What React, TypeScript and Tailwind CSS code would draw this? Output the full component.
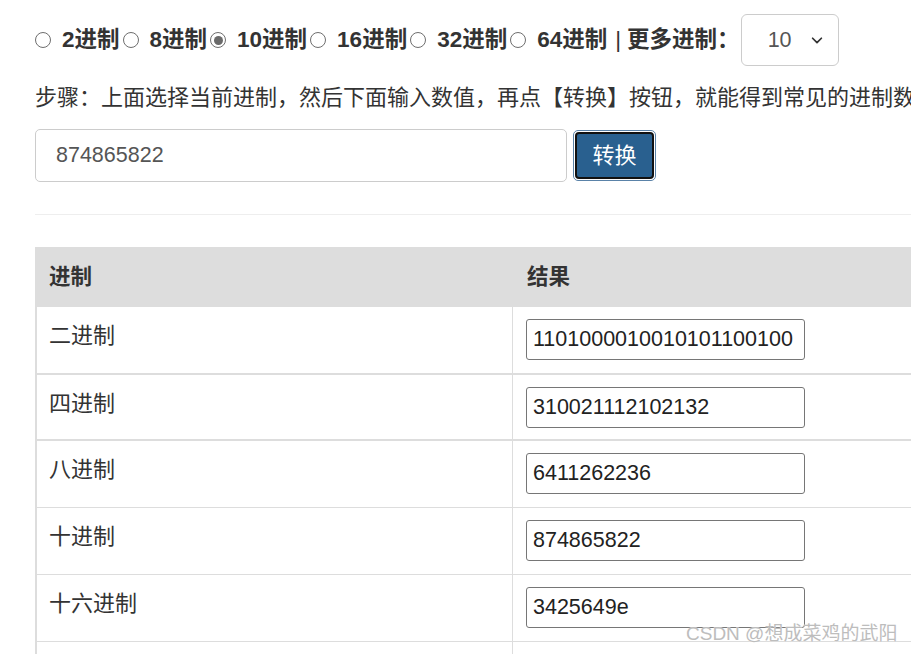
import { useState } from "react";

// ── Data ───────────────────────────────────────────────────

const BASES = ["2", "8", "10", "16", "32", "64"];

const RESULTS: { label: string; value: string }[] = [
  { label: "二进制", value: "1101000010010101100100" },
  { label: "四进制", value: "310021112102132" },
  { label: "八进制", value: "6411262236" },
  { label: "十进制", value: "874865822" },
  { label: "十六进制", value: "3425649e" },
  { label: "三十二进制", value: "q2lb4u" },
];

const FONT = "font-['Liberation_Sans','Noto_Sans_CJK_SC',sans-serif]";

// ── Radio glyph (old-style Chrome radio) ───────────────────

function Radio({ checked }: { checked: boolean }) {
  return (
    <span className="flex h-[16px] w-[16px] shrink-0 items-center justify-center rounded-full border-[1.5px] border-[#6e6e6e] bg-white">
      {checked && <span className="h-[9px] w-[9px] rounded-full bg-[#6a6a6a]" />}
    </span>
  );
}

function App() {
  const [base, setBase] = useState("10");
  const [value, setValue] = useState("874865822");

  return (
    <div
      className={`relative h-[654px] w-[911px] overflow-hidden bg-white text-[#333] ${FONT}`}>
      <div className="w-[1000px] pl-[35px]">
        {/* Base selector row */}
        <div className="mt-[14px] flex h-[52px] items-center whitespace-nowrap text-[22.5px] font-bold">
          {BASES.map((b, i) => (
            <button
              key={b}
              onClick={() => setBase(b)}
              className={`flex items-center ${i > 0 ? "ml-[3px]" : ""}`}>
              <Radio checked={base === b} />
              <span className="ml-[11px]">{b}进制</span>
            </button>
          ))}
          <span className="ml-[8px] font-normal">|</span>
          <span className="ml-[6px]">更多进制：</span>
          <div className="ml-[1px] flex h-[52px] w-[98px] items-center rounded-[6px] border border-[#ccc] pl-[26px] pr-[8px] text-[21.5px] font-normal text-[#555]">
            <span className="flex-1">{base}</span>
            <svg width="14" height="14" viewBox="0 0 16 16" className="mr-[6px]">
              <path
                d="M3 6l5 5 5-5"
                fill="none"
                stroke="#333"
                strokeWidth="2"
                strokeLinecap="round"
                strokeLinejoin="round"
              />
            </svg>
          </div>
        </div>

        {/* Steps hint */}
        <p className="mt-[17px] whitespace-nowrap text-[22px] leading-[30px]">
          步骤：上面选择当前进制，然后下面输入数值，再点【转换】按钮，就能得到常见的进制数值。
        </p>

        {/* Input + convert */}
        <div className="mt-[16px] flex items-center">
          <input
            value={value}
            onChange={(e) => setValue(e.target.value)}
            className="h-[53px] w-[532px] rounded-[5px] border border-[#ccc] px-[20px] text-[21.5px] text-[#555] outline-none"
          />
          <div className="ml-[6px] rounded-[5px] border border-[#5a82a8] bg-white p-px">
            <button className="flex h-[47px] w-[79px] items-center justify-center rounded-[4px] border-2 border-[#111] bg-[#29608f] text-[22px] text-white">
              转换
            </button>
          </div>
        </div>

        <div className="mt-[32px] h-px bg-[#eee]" />

        {/* Results table */}
        <div className="mt-[32px]">
          <div className="flex h-[60px] items-center bg-[#ddd] text-[21.5px] font-bold">
            <div className="w-[478px] pl-[14px]">进制</div>
            <div className="pl-[14px]">结果</div>
          </div>
          {RESULTS.map((r, i) => (
            <div
              key={r.label}
              className={`flex border-l-2 border-[#ddd] ${
                i === 0 ? "h-[68px] border-b-2" : i === 1 ? "h-[66px] border-b-2" : "h-[67px] border-b"
              }`}>
              <div className="w-[476px] border-r border-[#ddd] pl-[12px] pt-[14px] text-[22px] leading-[30px]">
                {r.label}
              </div>
              <div className="pl-[13px] pt-[12px]">
                <input
                  readOnly
                  value={r.value}
                  className="h-[41px] w-[279px] rounded-[3px] border border-[#767676] px-[6px] text-[21.5px] text-[#222] outline-none"
                />
              </div>
            </div>
          ))}
        </div>
      </div>

      {/* Watermark */}
      <div className="absolute left-[686px] top-[620px] whitespace-nowrap text-[19px] text-[#bdbdbd] [text-shadow:0_0_1px_#fff]">
        CSDN @想成菜鸡的武阳
      </div>
    </div>
  );
}

export default App;
